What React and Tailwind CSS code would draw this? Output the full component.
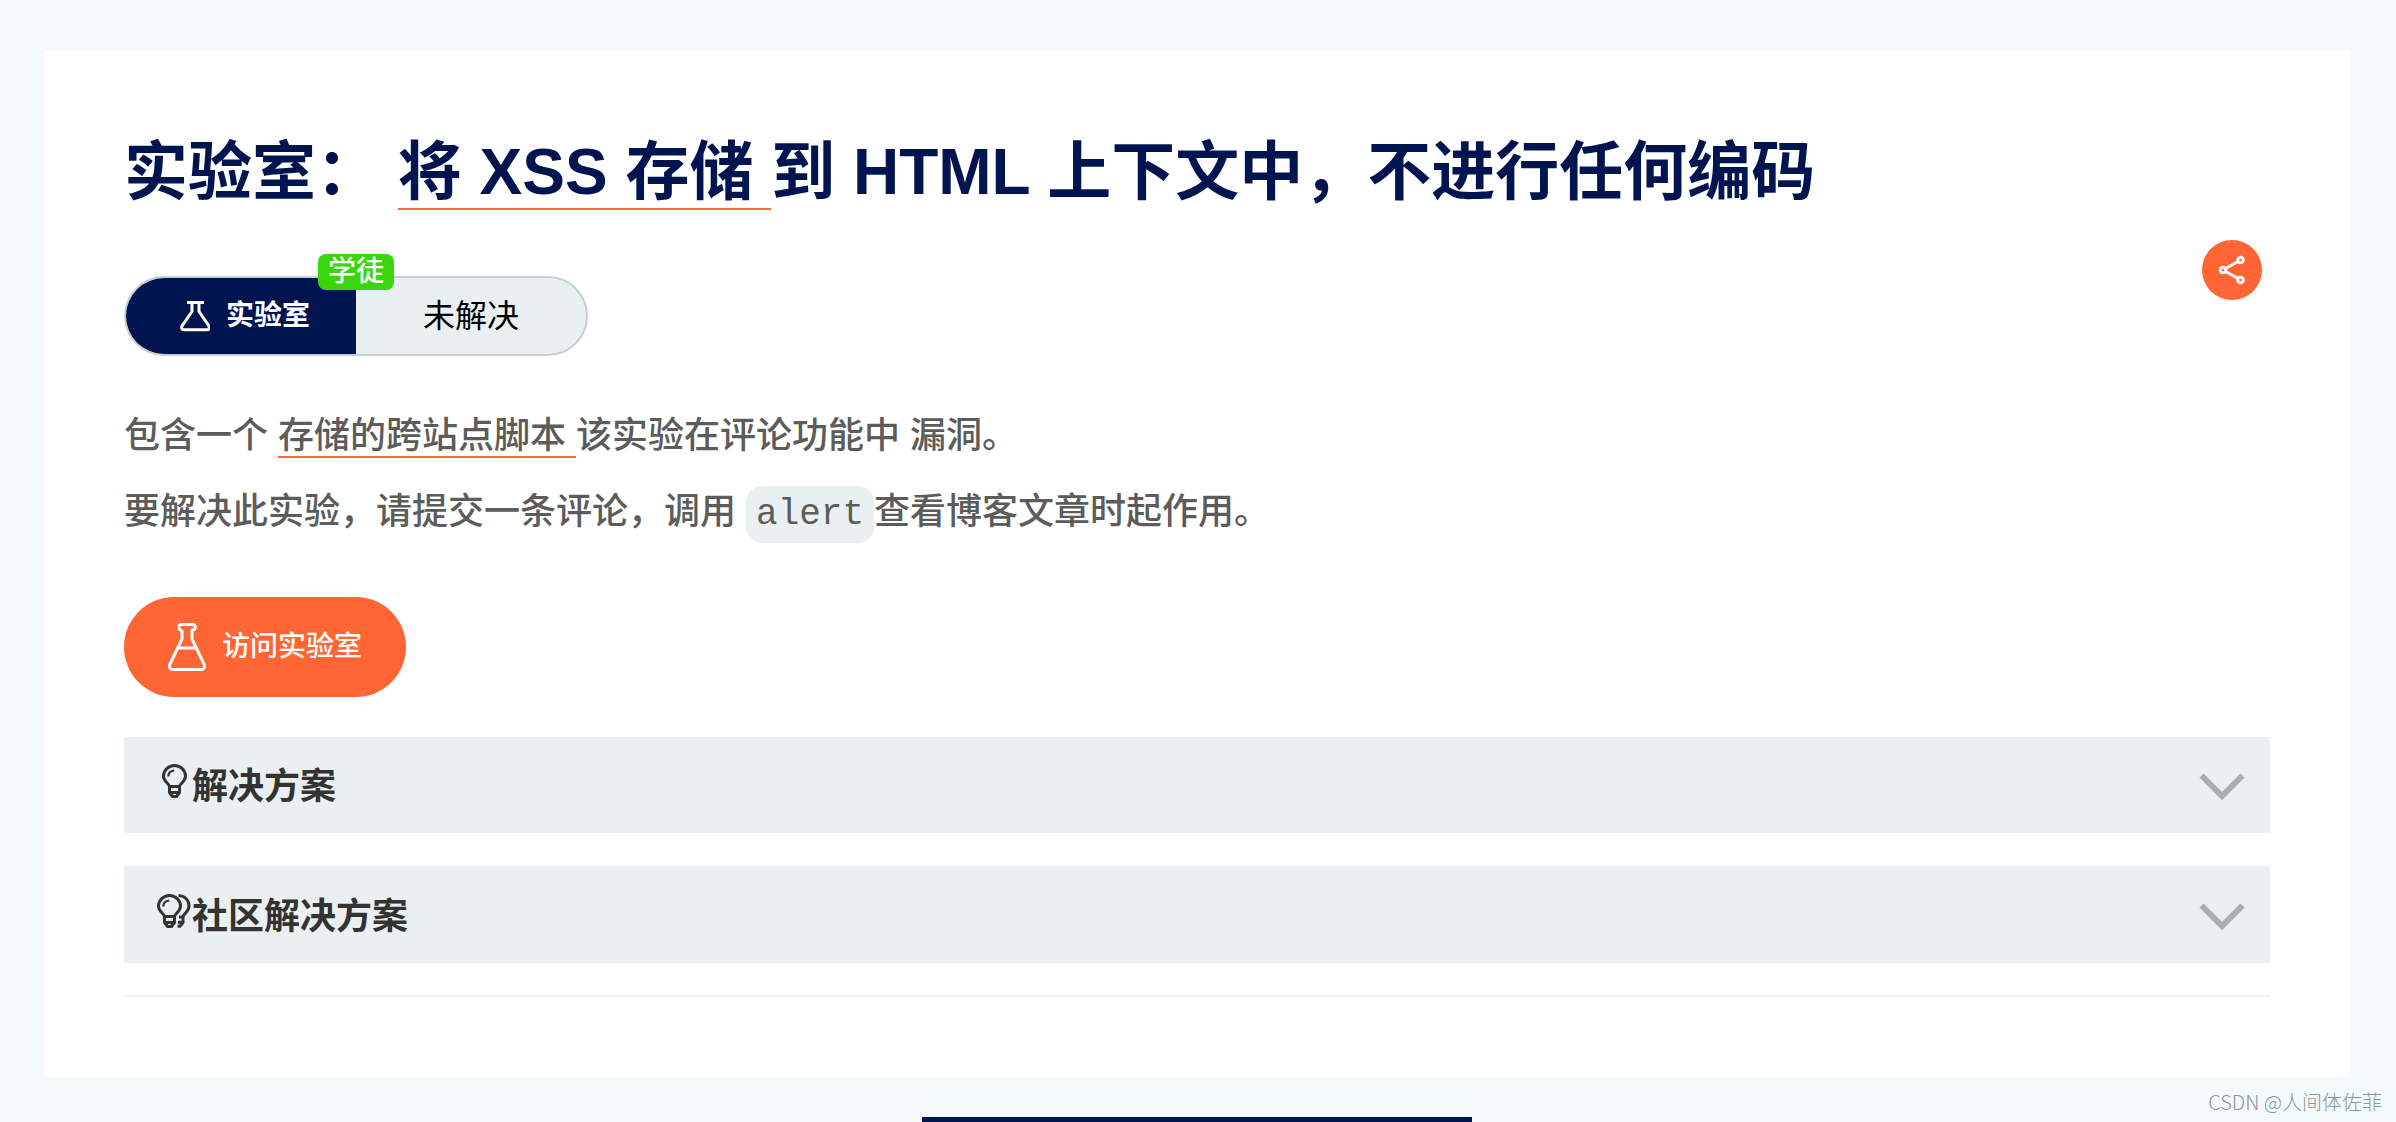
const FlaskIcon = () => (
  <svg width="30" height="32" viewBox="0 0 30 32" fill="none" stroke="currentColor" strokeWidth="3" strokeLinejoin="round" aria-hidden="true">
    <path d="M7 2.500h17M12 3v8.500L2.300 25.500q-2 4.300 2 4.300h22.400q4 0 2-4.300L19 11.500V3" />
  </svg>
);

const FilledFlaskIcon = () => (
  <svg width="38" height="48" viewBox="0 0 38 48" fill="none" stroke="currentColor" strokeWidth="3" strokeLinejoin="round" aria-hidden="true">
    <path d="M14 7h-1a2.800 2.800 0 0 1 0-5.500h12a2.800 2.800 0 0 1 0 5.500h-1v9l12.200 25.500q1.200 5-3.200 5H5q-4.400 0-3.200-5L14 16V7" />
    <path d="M10 25h18" />
  </svg>
);

const Bulb = () => (
  <>
    <path d="M7.500 22.500C7 19.500 1.500 17.500 1.500 12.200a11 10.700 0 0 1 22 0C23.500 17.500 18 19.500 17.500 22.500Z" />
    <path d="M7.500 22.500v6l3 4h4l3-4v-6M7.500 28.500h10" />
    <path strokeWidth="2.200" d="M6.300 12.500c0-3.500 2.500-5.700 6-6" />
  </>
);

const BulbIcon = () => (
  <svg width="25" height="34" viewBox="0 0 25 34" fill="none" stroke="currentColor" strokeWidth="3" strokeLinejoin="round" aria-hidden="true">
    <Bulb />
  </svg>
);

const BulbsIcon = () => (
  <svg width="34" height="34" viewBox="0 0 34 34" fill="none" stroke="currentColor" strokeWidth="3" strokeLinejoin="round" aria-hidden="true">
    <Bulb />
    <path d="M21.500 1.500c6.500.5 10.500 4.700 10.500 10.700 0 5.300-5.500 7.300-6 10.800h-4M26 22.500v6l-3 3.800h-2.500M21 28.300h5" />
  </svg>
);

const ShareIcon = () => (
  <svg width="28" height="30" viewBox="0 0 28 30" fill="none" stroke="currentColor" strokeWidth="3" aria-hidden="true">
    <circle cx="5" cy="15" r="2.800" />
    <circle cx="22.500" cy="5" r="2.800" />
    <circle cx="22.500" cy="25" r="2.800" />
    <path d="m7.500 13.500 12.500-7M7.500 16.500l12.500 7" />
  </svg>
);

const ChevronIcon = () => (
  <svg width="46" height="28" viewBox="0 0 46 28" fill="none" stroke="#adadad" strokeWidth="6" aria-hidden="true">
    <path d="m2.500 2.500 20.500 20.500L43.500 2.500" />
  </svg>
);

const solutions = [
  { title: '解决方案', Icon: BulbIcon, border: 'border-transparent' },
  { title: '社区解决方案', Icon: BulbsIcon, border: 'border-[#f2f4f5]' },
];

export default function App() {
  return (
    <div
      lang="zh-CN"
      className="relative flex min-h-screen flex-col overflow-hidden bg-[#f2fafc] pt-[50px] pr-[46px] pl-11 font-['Liberation_Sans','Noto_Sans_CJK_SC',sans-serif]"
    >
      <main className="bg-white px-20 pt-20 pb-20 text-[#5c5c5b]">
        <h1 className="text-[64px] leading-[84px] font-bold text-[#00144f]">
          实验室：{' '}
          <a href="#stored" className="inline-block h-[80px] border-b-2 border-[#ff6633] whitespace-pre">将 XSS 存储 </a>
          到 HTML 上下文中，不进行任何编码
        </h1>

        <div className="mt-[26px] flex items-start justify-between pr-2">
          <div className="relative mt-9 flex h-20 w-[464px] rounded-full border-2 border-[#c8cfd1] bg-[#eaeff2]">
            <div className="flex w-[230px] items-center justify-center gap-4 rounded-l-full bg-[#00144f] pl-2 text-[28px] font-bold text-white">
              <FlaskIcon />
              <span>实验室</span>
            </div>
            <div className="flex flex-1 items-center justify-center text-[32px] text-black">未解决</div>
            <span className="absolute -top-6 left-48 h-9 rounded-lg bg-[#3ad60b] px-[10px] text-[28px] leading-9 font-medium text-white">学徒</span>
          </div>
          <button type="button" aria-label="分享" className="flex size-15 items-center justify-center rounded-full bg-[#ff6633] text-white">
            <ShareIcon />
          </button>
        </div>

        <div className="mt-11 space-y-1 text-[36px] leading-[72px] font-medium">
          <p>
            包含一个{' '}
            <a href="#xss" className="border-b-2 border-[#ff6633] whitespace-pre">存储的跨站点脚本 </a>
            该实验在评论功能中 漏洞。
          </p>
          <p>
            要解决此实验，请提交一条评论，调用{' '}
            <code className="rounded-2xl bg-[#eaeff2] px-[10px] py-2 font-['Liberation_Mono',monospace]">alert</code>
            查看博客文章时起作用。
          </p>
        </div>

        <a href="#lab" className="mt-[46px] flex h-[100px] w-[282px] items-center justify-center gap-4 rounded-full bg-[#ff6633] text-[28px] font-medium text-white">
          <FilledFlaskIcon />
          访问实验室
        </a>

        <div className="mt-[38px] flex flex-col gap-8 border-b-2 border-[#f2f4f5] pb-8">
          {solutions.map(({ title, Icon, border }) => (
            <button
              key={title}
              type="button"
              className={`flex h-[98px] items-center justify-between border-t-2 bg-[#eaeff2] bg-clip-padding pt-1 pr-[25px] pl-8 text-left text-[36px] font-bold text-[#333332] ${border}`}
            >
              <span className="flex items-center">
                <span className="flex w-9 justify-center pb-3">
                  <Icon />
                </span>
                {title}
              </span>
              <ChevronIcon />
            </button>
          ))}
        </div>
      </main>

      <div className="mx-auto mt-10 h-[5px] w-[550px] bg-[#00144f]" />
      <span className="absolute right-[14px] bottom-[6px] font-['Noto_Sans_CJK_SC',sans-serif] text-[20px] leading-7 font-light text-[#8f9496]">
        CSDN @人间体佐菲
      </span>
    </div>
  );
}
